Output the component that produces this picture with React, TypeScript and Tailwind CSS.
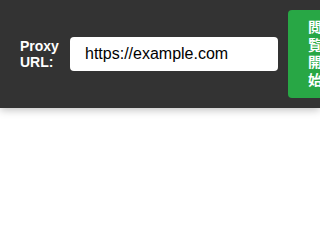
export default function App() {
  return (
    <div className="min-h-screen bg-white font-['Liberation_Sans',Arial,'Noto_Sans_CJK_JP',sans-serif]">
      <header className="flex items-center gap-[10px] overflow-hidden bg-[#333333] px-5 py-[10px] shadow-[0_2px_8px_rgba(0,0,0,0.25)]">
        <label className="w-[40px] shrink-0 text-sm leading-4 font-bold text-white">Proxy URL:</label>
        <input
          type="text"
          defaultValue="https://example.com"
          className="h-[34px] w-[208px] shrink-0 rounded bg-white px-[15px] text-base text-black outline-none"
        />
        <button className="shrink-0 rounded bg-[#28a745] px-5 py-[9px] text-sm leading-[17.5px] font-bold text-white">
          <span className="block w-[14px] break-all">閲覧開始</span>
        </button>
      </header>
    </div>
  );
}
